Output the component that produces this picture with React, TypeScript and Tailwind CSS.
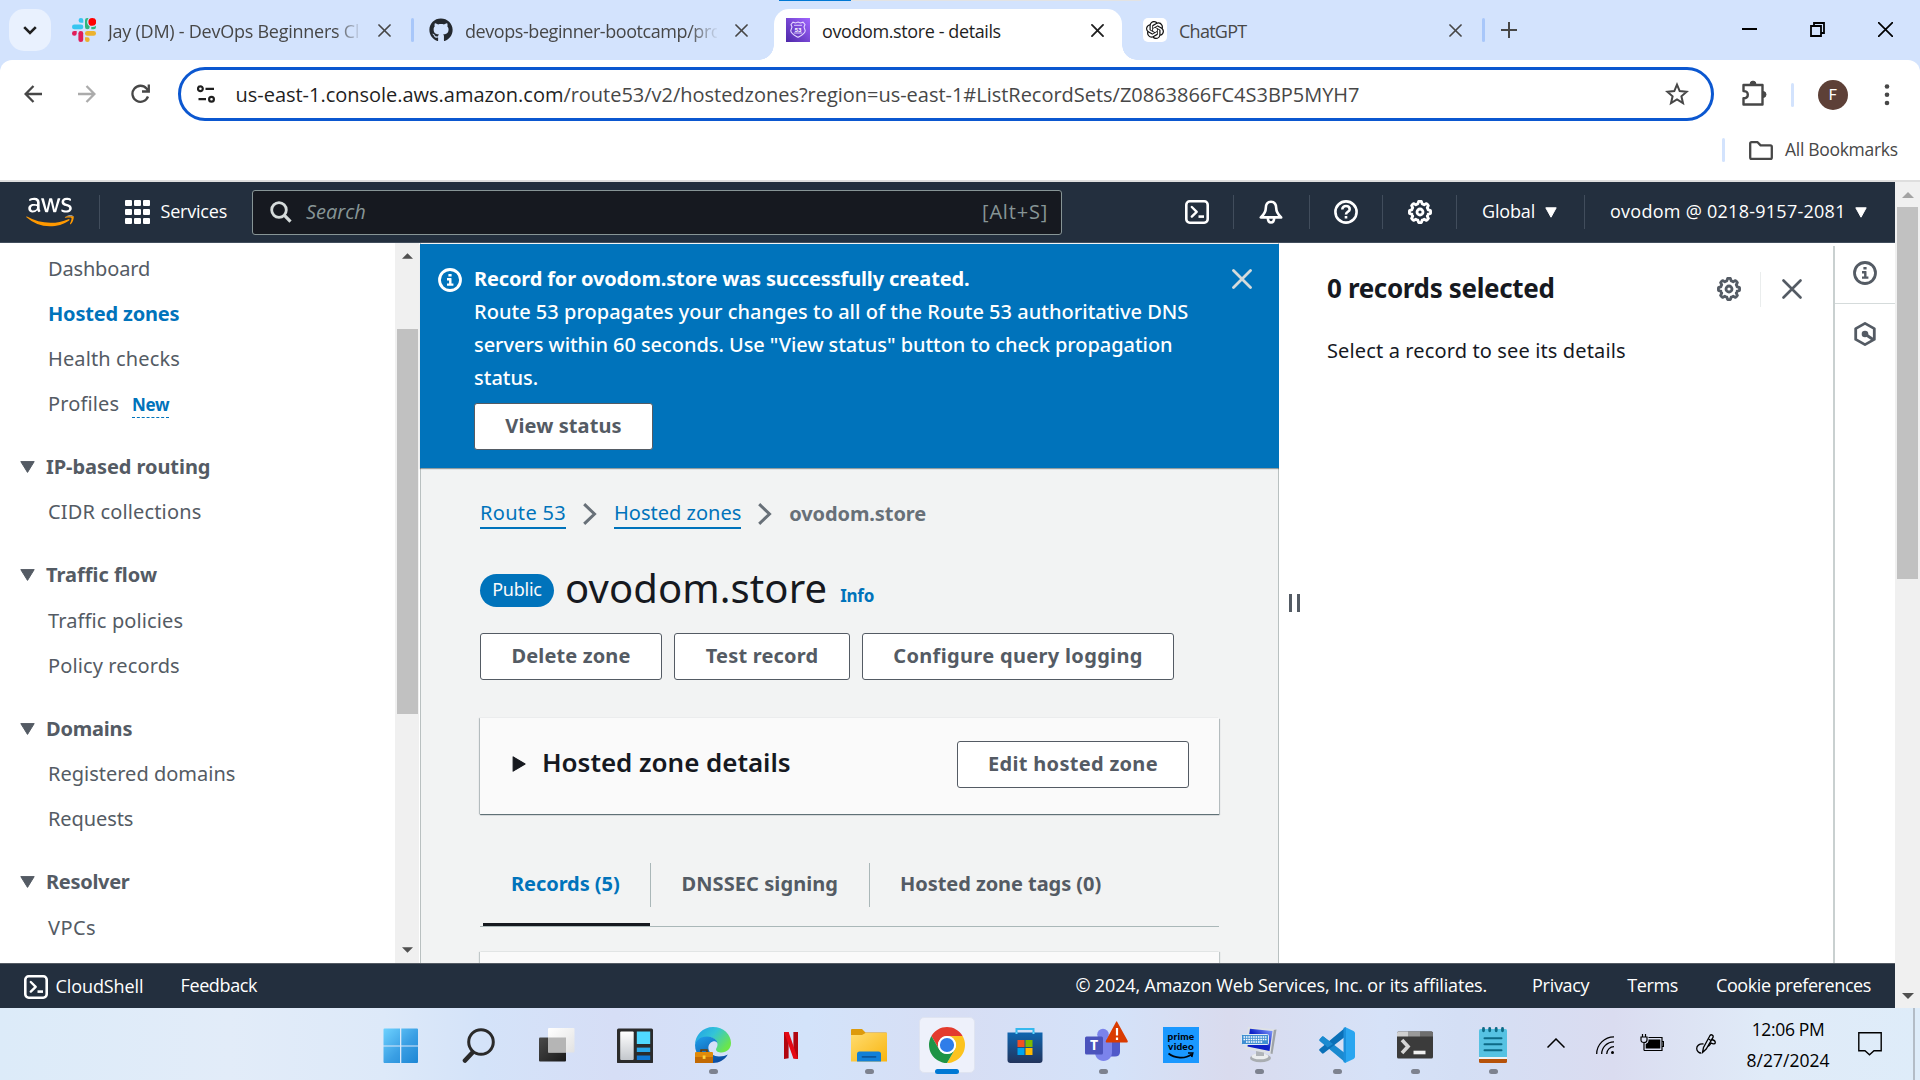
import type { ReactNode } from 'react';
import { FaAws, FaGithub } from 'react-icons/fa';
import { SiOpenai } from 'react-icons/si';

/* ---------- shared icons ---------- */

function gearPath(cx: number, cy: number, r: number, bump: number) {
  const pts: string[] = [];
  for (let i = 0; i < 96; i++) {
    const a = (i / 96) * Math.PI * 2;
    const wave = Math.max(-1, Math.min(1, Math.cos(a * 8) * 2));
    const rad = r + bump * wave;
    pts.push(`${(cx + rad * Math.cos(a)).toFixed(2)} ${(cy + rad * Math.sin(a)).toFixed(2)}`);
  }
  return `M${pts.join('L')}Z`;
}
const GEAR = gearPath(12, 12, 9.5, 1.1);

function Gear() {
  return (
    <svg className="size-6 shrink-0" viewBox="0 0 24 24" fill="none" stroke="currentColor" strokeWidth="2.8" strokeLinejoin="round">
      <path d={GEAR} />
      <circle cx="12" cy="12" r="3" />
    </svg>
  );
}

function Shell() {
  return (
    <svg className="size-6 shrink-0" viewBox="0 0 24 24" fill="none" stroke="currentColor" strokeWidth="2.6">
      <rect x="1.3" y="1.3" width="21.4" height="21.4" rx="3.4" />
      <path d="M6.8 7l4.900 4.800-4.900 4.800" strokeLinejoin="round" strokeLinecap="round" strokeWidth="2.4" />
      <path d="M13.500 16.600h5.500" strokeWidth="2.6" />
    </svg>
  );
}

function Info() {
  return (
    <svg className="size-6 shrink-0" viewBox="0 0 24 24" fill="none" stroke="currentColor" strokeWidth="2.8">
      <circle cx="12" cy="12" r="10.5" />
      <path d="M10.4 7.3h3.2M9 11.3h4.4M9 16.6h6.4M12.3 11v5.5" strokeWidth="2.4" />
    </svg>
  );
}

function Cross({ className, w }: { className: string; w: number }) {
  return (
    <svg className={`shrink-0 ${className}`} viewBox="0 0 20 20" fill="none" stroke="currentColor" strokeWidth={w} strokeLinecap="round">
      <path d="M1.5 1.5l17 17M18.5 1.5l-17 17" />
    </svg>
  );
}

function Caret({ className }: { className: string }) {
  return (
    <svg className={className} viewBox="0 0 12 11" fill="currentColor" stroke="currentColor" strokeLinejoin="round" strokeWidth="1">
      <path d="M.8.8h10.4L6 10.2z" />
    </svg>
  );
}

function ScrollArrow({ down, className }: { down?: boolean; className: string }) {
  return (
    <svg className={className} viewBox="0 0 12 6" fill="currentColor">
      <path d={down ? 'M0 0h12L6 6z' : 'M0 6h12L6 0z'} />
    </svg>
  );
}

/* ---------- browser chrome ---------- */

function SlackIcon() {
  return (
    <svg className="size-6 shrink-0" viewBox="0 0 24 24">
      <g fill="#36c5f0"><path d="M11.3 4.7H9A2.35 2.35 0 1 1 11.3 2.3z" /><rect y="6.6" width="11.3" height="4.7" rx="2.3" /></g>
      <g fill="#2eb67d"><rect x="13" width="4.7" height="11.3" rx="2.3" /><path d="M19.3 11.3V9A2.35 2.35 0 1 1 21.7 11.3z" /></g>
      <g fill="#e01e5a"><path d="M4.7 13v2.3A2.35 2.35 0 1 1 2.3 13z" /><rect x="6.4" y="13" width="4.8" height="11" rx="2.3" /></g>
      <g fill="#ecb22e"><rect x="13" y="13" width="11" height="4.7" rx="2.3" /><path d="M13 19.3h2.3A2.35 2.35 0 1 1 13 21.7z" /></g>
      <circle cx="20.300" cy="3.900" r="5.200" fill="#d3e3fd" />
      <circle cx="20.3" cy="3.9" r="3.9" fill="#ff0000" />
    </svg>
  );
}

function Route53Icon() {
  return (
    <svg className="size-6 shrink-0" viewBox="0 0 24 24" fill="none">
      <defs>
        <linearGradient id="r53" x1="0" y1="1" x2="1" y2="0"><stop stopColor="#4d27a8" /><stop offset="1" stopColor="#a166ff" /></linearGradient>
      </defs>
      <rect width="24" height="24" fill="url(#r53)" />
      <path d="M12 4l2.4 1 2.6-.8 2 2.3-1 2.5 1.2 3.7c0 3-3.6 4.600-7.200 6.600-3.600-2-7.200-3.600-7.200-6.600L6 9 5 6.500l2-2.300 2.600.8z" stroke="#e6d8ff" strokeWidth="1.1" />
      <path d="M8 7.300h8M7.800 15h8.400" stroke="#e6d8ff" strokeWidth=".9" />
      <text x="12" y="14" textAnchor="middle" fontFamily="Roboto" fontSize="6" fontWeight="700" fill="#fff">53</text>
    </svg>
  );
}

function TabTitle({ children, className }: { children: ReactNode; className: string }) {
  return <span className={`shrink-0 overflow-hidden whitespace-nowrap pt-[2px] text-[18px] leading-6 ${className}`}>{children}</span>;
}

function TabStrip() {
  return (
    <div className="relative flex h-[60px] shrink-0 items-start bg-[#d3e3fd] pt-[9px] font-['Open_Sans',sans-serif] text-[#474747]">
      <div className="absolute left-[779px] top-0 flex h-px w-[362px] bg-[#e3e3e3]"><div className="w-[72px] bg-[#0078d4]" /></div>
      <div className="ml-[9px] flex size-[42px] items-center justify-center rounded-[15px] bg-[#e9f1fe] text-[#1f1f1f]">
        <svg className="h-[9px] w-[14px]" viewBox="0 0 14 9" fill="none" stroke="currentColor" strokeWidth="2.600"><path d="M1.200 1.200L7 7l5.800-5.800" /></svg>
      </div>

      <div className="ml-[21px] flex h-[42px] w-[342px] items-center">
        <SlackIcon />
        <TabTitle className="ml-3 w-[252px] tracking-[-0.25px] [mask-image:linear-gradient(to_right,#000_228px,transparent_254px)]">Jay (DM) - DevOps Beginners Cl</TabTitle>
        <Cross className="ml-[18px] size-[13px]" w={2.600} />
        <div className="ml-[20px] h-6 w-[3px] rounded bg-[#a8c7fa]" />
      </div>

      <div className="ml-[15px] flex h-[42px] w-[345px] items-center">
        <FaGithub className="size-6 shrink-0 text-[#24292f]" />
        <TabTitle className="ml-[12px] w-[252px] tracking-[-0.43px] [mask-image:linear-gradient(to_right,#000_224px,transparent_254px)]">devops-beginner-bootcamp/pro</TabTitle>
        <Cross className="ml-[18px] size-[13px]" w={2.600} />
      </div>

      <div className="relative flex h-[51px] w-[348px] rounded-t-[15px] bg-white">
        <div className="absolute -left-[15px] bottom-0 size-[15px] bg-[radial-gradient(circle_at_0_0,transparent_14.500px,#fff_15px)]" />
        <div className="absolute -right-[15px] bottom-0 size-[15px] bg-[radial-gradient(circle_at_100%_0,transparent_14.500px,#fff_15px)]" />
        <div className="flex h-[42px] w-full items-center pl-3 text-[#1f1f1f]">
          <Route53Icon />
          <TabTitle className="ml-3 w-[252px] tracking-[-0.4px]">ovodom.store - details</TabTitle>
          <Cross className="ml-[17px] size-[13px]" w={2.800} />
        </div>
      </div>

      <div className="ml-[21px] flex h-[42px] w-[342px] items-center">
        <div className="flex size-6 shrink-0 items-center justify-center rounded-[5px] bg-white text-[#111]"><SiOpenai className="size-[18px]" /></div>
        <TabTitle className="ml-3 w-[252px] tracking-[-0.75px]">ChatGPT</TabTitle>
        <Cross className="ml-[18px] size-[13px]" w={2.600} />
        <div className="ml-[20px] h-6 w-[3px] shrink-0 rounded bg-[#a8c7fa]" />
      </div>

      <svg className="ml-[16px] mt-[13px] size-4" viewBox="0 0 16 16" stroke="currentColor" strokeWidth="2"><path d="M8 0v16M0 8h16" /></svg>
      <div className="ml-auto mr-[27px] mt-[13px] flex h-[15px] gap-[53px] text-black">
        <svg className="size-[15px]" viewBox="0 0 15 15" stroke="currentColor" strokeWidth="2"><path d="M0 7h15" /></svg>
        <svg className="size-[15px]" viewBox="0 0 15 15" fill="none" stroke="currentColor" strokeWidth="1.800"><path d="M1 4h10v10H1zM4 4V1h10v10h-3" /></svg>
        <svg className="size-[15px]" viewBox="0 0 15 15" stroke="currentColor" strokeWidth="1.700"><path d="M0 0l15 15M15 0L0 15" /></svg>
      </div>
    </div>
  );
}

function Toolbar() {
  return (
    <div className="shrink-0 bg-[#d3e3fd]">
      <div className="flex h-[68px] items-start rounded-t-[12px] bg-white font-['Open_Sans',sans-serif] text-[#474747]">
        <div className="flex h-[68px] w-[178px] items-center pl-6">
          <svg className="size-[18px]" viewBox="0 0 18 18" fill="none" stroke="currentColor" strokeWidth="2.300"><path d="M18 9H2M9.500 1L1.600 9l7.900 8" /></svg>
          <svg className="ml-9 size-[18px] text-[#ababab]" viewBox="0 0 18 18" fill="none" stroke="currentColor" strokeWidth="2.300"><path d="M0 9h16M8.500 1l7.900 8-7.900 8" /></svg>
          <svg className="ml-[35px] h-5 w-[19px]" viewBox="0 0 19 20" fill="none" stroke="currentColor" strokeWidth="2.300"><path d="M17 12.500A8 8 0 1 1 15.500 4.500L17.600 7M17.800 0.500V7.500H11" /></svg>
        </div>
        <div className="mt-[7px] flex h-[54px] w-[1536px] items-center rounded-full border-[3px] border-[#0b57d0] pl-4">
          <svg className="h-[18px] w-[18px] text-[#1f1f1f]" viewBox="0 0 18 18" fill="none" stroke="currentColor" strokeWidth="2.200"><circle cx="3.400" cy="3.800" r="2.400" /><path d="M8.500 3.800H17M1.500 14.200H9" /><circle cx="14.500" cy="14.200" r="2.400" /></svg>
          <span className="ml-[20.500px] mt-[2px] whitespace-nowrap text-[20px] leading-7 tracking-[-0.02px] text-[#474747]"><span className="text-[#1f1f1f]">us-east-1.console.aws.amazon.com</span>/route53/v2/hostedzones?region=us-east-1#ListRecordSets/Z0863866FC4S3BP5MYH7</span>
          <svg className="ml-auto mr-[22px] size-6" viewBox="0 0 24 24" fill="none" stroke="currentColor" strokeWidth="2"><path d="M12 2.600l2.700 6.500 7 .6-5.300 4.600 1.600 6.900-6-3.700-6 3.700 1.600-6.900-5.300-4.600 7-.6z" /></svg>
        </div>
        <svg className="ml-[27px] mt-[20px] h-[27px] w-[26px]" viewBox="0 0 26 27" fill="none" stroke="currentColor" strokeWidth="2.400"><path d="M2.500 5h19v19.500h-19v-6.200c3 0 4.300-1.800 4.300-3.600s-1.300-3.600-4.300-3.600z" strokeLinejoin="round" /><path d="M9 4.500a3 3.400 0 0 1 6 0zM22 11.500a3 3 0 0 1 0 6z" fill="currentColor" strokeWidth="1" /></svg>
        <div className="ml-[24px] mt-[23px] h-6 w-[3px] rounded bg-[#d3e3fd]" />
        <div className="ml-6 mt-5 flex size-[30px] items-center justify-center rounded-full bg-[#5d4037] font-['Roboto',sans-serif] text-[15px] text-white">F</div>
        <svg className="ml-9 mt-[23px] h-6 w-[6px]" viewBox="0 0 6 24" fill="currentColor"><circle cx="3" cy="3.500" r="2.300" /><circle cx="3" cy="11.700" r="2.300" /><circle cx="3" cy="20" r="2.300" /></svg>
      </div>
      <div className="flex h-[52px] items-center bg-white pb-[8px] pl-[1722px] pt-0 font-['Open_Sans',sans-serif] text-[#474747]">
        <div className="h-6 w-[3px] rounded bg-[#d3e3fd]" />
        <svg className="ml-6 h-[19px] w-[24px] shrink-0" viewBox="0 0 24 19" fill="none" stroke="currentColor" strokeWidth="2.300" strokeLinejoin="round"><path d="M1.200 2.600q0-1.400 1.400-1.400h6l3 3.200h9.800q1.400 0 1.400 1.400v10.600q0 1.400-1.400 1.400H2.600q-1.400 0-1.400-1.400z" /></svg>
        <span className="mb-[2px] ml-3 whitespace-nowrap text-[17.500px] tracking-[-0.3px]">All Bookmarks</span>
      </div>
      <div className="h-[2px] bg-[#dedede]" />
    </div>
  );
}

/* ---------- AWS header ---------- */

function NavCell({ children, className }: { children: ReactNode; className: string }) {
  return <div className={`flex h-[34px] shrink-0 items-center border-l border-[#414d5c] ${className}`}>{children}</div>;
}

function AwsHeader() {
  return (
    <header className="flex h-[61px] shrink-0 items-center border-b border-[#414d5c] bg-[#232f3e] font-['Open_Sans',sans-serif] text-[18px] font-medium text-white">
      <div className="relative ml-[26px] h-[38px] w-12 shrink-0">
        <FaAws className="absolute inset-0 h-[38px] w-12 [clip-path:inset(0_0_39%_0)]" />
        <FaAws className="absolute inset-0 h-[38px] w-12 text-[#ff9900] [clip-path:inset(61%_0_0_0)]" />
      </div>
      <NavCell className="ml-[25px] w-[153px] pl-[25px]">
        <div className="grid grid-cols-3 gap-[2.500px]">
          {Array.from({ length: 9 }, (_, i) => <div key={i} className="size-[6.500px] rounded-[1px] bg-white" />)}
        </div>
        <span className="mb-px ml-[11px] tracking-[-0.2px]">Services</span>
      </NavCell>
      <div className="flex h-[45px] w-[810px] shrink-0 items-center rounded-[3px] border border-[#879596] bg-[#161920] pl-[17px] pr-[13px] text-[20px] font-normal text-[#879596]">
        <svg className="size-[22px] text-[#d5dbdb]" viewBox="0 0 22 22" fill="none" stroke="currentColor" strokeWidth="2.800"><circle cx="9" cy="9" r="7.300" /><path d="M14.200 14.200l6.300 6.500" strokeWidth="3.200" /></svg>
        <span className="ml-[14px] text-[20px] italic">Search</span>
        <span className="ml-auto text-[20px] tracking-[0.8px]">[Alt+S]</span>
      </div>
      <div className="flex w-[171px] shrink-0 justify-end pr-6"><Shell /></div>
      <NavCell className="w-[76px] justify-center pr-[2px]">
        <svg className="size-6" viewBox="0 0 24 24" fill="none" stroke="currentColor" strokeWidth="2.600" strokeLinejoin="round"><path d="M12 1.800c-3.600 0-5.200 2.800-5.200 6.200 0 4-1.800 6.500-5 9.400h20.400c-3.200-2.900-5-5.400-5-9.400 0-3.400-1.600-6.200-5.200-6.200z" /><path d="M8.800 17.500c0 3.200 1.200 5 3.200 5s3.200-1.800 3.200-5" /></svg>
      </NavCell>
      <NavCell className="w-[73px] justify-center">
        <svg className="size-6" viewBox="0 0 24 24" fill="none" stroke="currentColor" strokeWidth="2.600"><circle cx="12" cy="12" r="10.600" /><path d="M8.300 9.400c0-2 1.500-3.400 3.700-3.400s3.700 1.300 3.700 3.200c0 2.600-3.700 2.600-3.700 5.200M12 15.900v2.500" /></svg>
      </NavCell>
      <NavCell className="w-[74px] justify-center"><Gear /></NavCell>
      <NavCell className="w-[128px] pl-[25px]">
        <span className="mb-px tracking-[-0.15px]">Global</span>
        <Caret className="ml-[10px] h-[11px] w-3" />
      </NavCell>
      <NavCell className="pl-[25px]">
        <span className="mb-px whitespace-nowrap tracking-[0.26px]">ovodom @ 0218-9157-2081</span>
        <Caret className="ml-[9px] h-[11px] w-3" />
      </NavCell>
    </header>
  );
}

/* ---------- side navigation ---------- */

function NavItem({ children, className = 'text-[#545b64]' }: { children: ReactNode; className?: string }) {
  return <a className={`flex h-[45px] items-center pl-12 ${className}`}>{children}</a>;
}

function NavSection({ title, titleClass, children }: { title: string; titleClass: string; children: ReactNode }) {
  return (
    <div className="pt-[17.500px]">
      <div className="flex h-[46px] items-center pl-[19.500px] font-bold text-[#545b64]">
        <svg className="h-3 w-[15px]" viewBox="0 0 15 12" fill="currentColor" stroke="currentColor" strokeLinejoin="round"><path d="M.8.600h13.400L7.500 11.400z" /></svg>
        <span className={`ml-[11.500px] ${titleClass}`}>{title}</span>
      </div>
      {children}
    </div>
  );
}

function SideNav() {
  return (
    <nav className="flex w-[420px] shrink-0 overflow-hidden">
      <div className="w-[395px] whitespace-nowrap bg-white pt-[3px] text-[20px] leading-[30px]">
        <NavItem><span className="tracking-[-0.17px]">Dashboard</span></NavItem>
        <NavItem className="font-bold tracking-[-0.18px] text-[#0073bb]">Hosted zones</NavItem>
        <NavItem><span className="tracking-[0.12px]">Health checks</span></NavItem>
        <NavItem>
          <span className="tracking-[0.12px]">Profiles</span>
          <span className="ml-[13px] mt-[3px] border-b border-dashed border-[#0073bb] text-[17px] font-bold leading-[25px] tracking-[-0.4px] text-[#0073bb]">New</span>
        </NavItem>
        <NavSection title="IP-based routing" titleClass="tracking-[-0.06px]">
          <NavItem><span className="tracking-[0.15px]">CIDR collections</span></NavItem>
        </NavSection>
        <NavSection title="Traffic flow" titleClass="">
          <NavItem><span className="tracking-[0.12px]">Traffic policies</span></NavItem>
          <NavItem><span className="tracking-[0.12px]">Policy records</span></NavItem>
        </NavSection>
        <NavSection title="Domains" titleClass="tracking-[-0.2px]">
          <NavItem>Registered domains</NavItem>
          <NavItem><span className="tracking-[-0.1px]">Requests</span></NavItem>
        </NavSection>
        <NavSection title="Resolver" titleClass="tracking-[-0.3px]">
          <NavItem><span className="tracking-[0.4px]">VPCs</span></NavItem>
        </NavSection>
      </div>
      <div className="flex w-6 flex-col items-center bg-[#f0f0f0] text-[#505050]">
        <ScrollArrow className="mt-[10px] h-[6px] w-[11px]" />
        <div className="ml-px mt-[70px] h-[385px] w-[21px] bg-[#c1c1c1]" />
        <ScrollArrow down className="mb-[10px] mt-auto h-[6px] w-[11px]" />
      </div>
    </nav>
  );
}

/* ---------- main column ---------- */

function Btn({ children, className }: { children: ReactNode; className: string }) {
  return <button className={`flex shrink-0 items-center justify-center whitespace-nowrap rounded-[3px] border border-[#545b64] bg-white pb-[1px] text-[20px] font-bold text-[#545b64] ${className}`}>{children}</button>;
}

function Chevron() {
  return <svg className="h-[22px] w-[14px] shrink-0" viewBox="0 0 14 22" fill="none" stroke="#687078" strokeWidth="3"><path d="M1.200 1.200L11.500 11 1.200 20.800" /></svg>;
}

function Main() {
  return (
    <main className="flex w-[859px] shrink-0 flex-col border-l border-r border-[#b9c0c0] bg-[#f2f3f3]">
      <section className="-mx-px mt-px flex h-[224px] shrink-0 bg-[#0073bb] pl-[18px] pt-[17.500px] text-[20px] leading-[33px] text-white shadow-[0_1px_1px_rgba(0,28,36,0.4)]">
        <div className="mt-[6.500px]"><Info /></div>
        <div className="ml-[12px] whitespace-nowrap font-medium">
          <p className="font-bold tracking-[-0.15px]">Record for ovodom.store was successfully created.</p>
          <p className="tracking-[0.02px]">Route 53 propagates your changes to all of the Route 53 authoritative DNS</p>
          <p className="tracking-[-0.06px]">servers within 60 seconds. Use "View status" button to check propagation</p>
          <p>status.</p>
          <Btn className="mt-[9.500px] h-[47px] w-[179px] pb-[3px] tracking-[0.1px]">View status</Btn>
        </div>
        <Cross className="ml-auto mr-[27px] mt-[7.500px] size-5 text-[#d5dbdb]" w={2.800} />
      </section>

      <div className="flex flex-col pl-[59px] pr-[59px]">
        <div className="mt-[30px] flex h-8 items-center text-[20px] leading-[30px]">
          <a className="border-b-2 border-[#0073bb] leading-[28px] tracking-[0.32px] text-[#0073bb]">Route 53</a>
          <div className="ml-[17px]"><Chevron /></div>
          <a className="ml-[17px] border-b-2 border-[#0073bb] leading-[28px] text-[#0073bb]">Hosted zones</a>
          <div className="ml-[17px]"><Chevron /></div>
          <span className="ml-[17px] font-bold tracking-[-0.1px] text-[#687078]">ovodom.store</span>
        </div>

        <div className="mt-[30px] flex h-[60px] items-center">
          <span className="mt-[1px] flex h-[33px] w-[74px] items-center justify-center rounded-full bg-[#0073bb] pb-[2px] text-[18px] tracking-[-0.25px] text-[#fafafa]">Public</span>
          <h1 className="mb-[5px] ml-[11px] text-[40px] leading-[50px] tracking-[0.1px] text-[#16191f]">ovodom.store</h1>
          <a className="ml-[13px] mt-[12px] text-[17px] font-bold leading-6 tracking-[-0.22px] text-[#0073bb]">Info</a>
        </div>

        <div className="mt-[13px] flex gap-3">
          <Btn className="h-[47px] w-[182px] tracking-[0.14px]">Delete zone</Btn>
          <Btn className="h-[47px] w-[176px] tracking-[0.2px]">Test record</Btn>
          <Btn className="h-[47px] w-[312px] tracking-[0.33px]">Configure query logging</Btn>
        </div>

        <section className="mt-[38px] flex h-[96px] items-center bg-[#fafafa] pl-8 pr-[30px] shadow-[0_1px_1px_rgba(0,28,36,0.5),1px_1px_1px_rgba(0,28,36,0.18),-1px_0_1px_rgba(0,28,36,0.18)]">
          <svg className="mb-[5px] h-[16px] w-[14px]" viewBox="0 0 13 15" fill="#16191f" stroke="#16191f" strokeLinejoin="round"><path d="M1 .8v13.400l11.200-6.700z" /></svg>
          <h2 className="mb-[9px] ml-[16px] whitespace-nowrap text-[26px] font-semibold leading-[34px] tracking-[-0.04px] text-[#16191f]">Hosted zone details</h2>
          <Btn className="mb-[3px] ml-auto h-[47px] w-[232px] tracking-[0.3px]">Edit hosted zone</Btn>
        </section>

        <div className="mt-[49px] flex h-[64px] border-b border-[#aab7b8] text-[20px] font-bold leading-[42px] text-[#545b64]">
          <div className="ml-[3px] flex w-[168px] flex-col justify-between">
            <div className="h-[44px] border-r border-[#aab7b8] pl-[28px] tracking-[-0.060px] text-[#0073bb]">Records (5)</div>
            <div className="h-[3px] w-[167px] bg-[#16191f]" />
          </div>
          <div className="h-[44px] w-[219px] whitespace-nowrap border-r border-[#aab7b8] pl-[30.500px] tracking-[0.08px]">DNSSEC signing</div>
          <div className="h-[44px] whitespace-nowrap pl-[30px] tracking-[-0.06px]">Hosted zone tags (0)</div>
        </div>
        <div className="mt-[25px] h-[40px] bg-[#fafafa] shadow-[-1px_0_1px_rgba(0,28,36,0.2),1px_0_1px_rgba(0,28,36,0.2)]" />
      </div>
    </main>
  );
}

/* ---------- details panel and rail ---------- */

function DetailsPanel() {
  return (
    <>
      <aside className="flex w-[554px] shrink-0 bg-white">
        <div className="mt-[351px] flex h-[18px] w-[48px] gap-[5px] pl-[10px]"><div className="w-[3px] bg-[#545b64]" /><div className="w-[3px] bg-[#545b64]" /></div>
        <div className="flex-1">
          <div className="mt-[28px] flex h-[36px] items-center text-[#545b64]">
            <h2 className="mb-[3px] text-[26px] font-bold leading-[34px] tracking-[-0.35px] text-[#16191f]">0 records selected</h2>
            <div className="ml-auto"><Gear /></div>
            <div className="ml-[19px] h-[35px] w-px bg-[#eaeded]" />
            <Cross className="ml-[21px] mr-[31px] size-[20px]" w={2.600} />
          </div>
          <p className="mt-[29px] text-[20px] leading-[30px] tracking-[0.13px] text-[#16191f]">Select a record to see its details</p>
        </div>
      </aside>
      <aside className="mt-[3px] flex w-[62px] shrink-0 flex-col items-center border-l-2 border-[#c9d0d0] bg-white text-[#545b64]">
        <div className="flex h-[58px] w-full items-center justify-center border-b border-[#d5dbdb] pb-[4px]"><Info /></div>
        <svg className="mt-[18px] size-6" viewBox="0 0 24 24" fill="none" stroke="currentColor" strokeWidth="2.800" strokeLinejoin="round"><path d="M12 1.400l9.300 5.200v10.800L12 22.600l-9.300-5.200V6.600z" /><circle cx="12" cy="12" r="3.300" fill="currentColor" stroke="none" /><path d="M12 12l8 5.500" /></svg>
      </aside>
    </>
  );
}

function AwsFooter() {
  return (
    <footer className="flex h-[45px] shrink-0 items-center whitespace-nowrap border-t border-[#545b64] bg-[#232f3e] pb-px pl-6 font-['Open_Sans',sans-serif] text-[18px] font-medium text-white">
      <div className="mt-[3px]"><Shell /></div>
      <span className="ml-[7.500px] mt-[2px] tracking-[-0.09px]">CloudShell</span>
      <span className="ml-[37px] tracking-[-0.37px]">Feedback</span>
      <span className="ml-auto tracking-[-0.16px]">© 2024, Amazon Web Services, Inc. or its affiliates.</span>
      <span className="ml-[45px] tracking-[-0.3px]">Privacy</span>
      <span className="ml-[38px] tracking-[-0.4px]">Terms</span>
      <span className="ml-[38px] mr-[24px] tracking-[-0.4px]">Cookie preferences</span>
    </footer>
  );
}

/* ---------- taskbar ---------- */

function TaskItem({ children, dot }: { children: ReactNode; dot?: boolean }) {
  return (
    <div className="flex h-[72px] w-[78px] flex-col items-center pt-[19px]">
      {children}
      {dot && <div className="mt-[6px] h-[5px] w-[9px] rounded-full bg-[#7d828f]" />}
    </div>
  );
}

function Taskbar() {
  return (
    <div className="flex h-[72px] shrink-0 bg-[linear-gradient(to_right,#dcebf9_0%,#e2ecf9_12%,#dde9f9_20%,#d4e3f9_25%,#d6def6_32%,#d3e3fa_42%,#d7def4_50%,#d4e2f9_58%,#d9dbee_64%,#d6e2f8_72%,#d4dff5_76%,#dadcf0_84%,#e0ebf8_92%,#deecf9_100%)] pl-[362px]">
      <TaskItem>
        <svg className="size-9" viewBox="0 0 36 36">
          <defs><linearGradient id="win" x1="0" y1="0" x2="1" y2="1"><stop stopColor="#6ed2ff" /><stop offset=".55" stopColor="#3a9fe4" /><stop offset="1" stopColor="#1c86d4" /></linearGradient></defs>
          <path d="M.5 2.500q0-1 1-1H17v17H.5zM18.300 1.500h15.700q1 0 1 1v16H18.300zM.5 19.500H17v16.500H1.500q-1 0-1-1zM18.300 19.500H35V35q0 1-1 1H18.300z" fill="url(#win)" />
        </svg>
      </TaskItem>
      <TaskItem>
        <svg className="size-9" viewBox="0 0 36 36" fill="none" stroke="#2a2a2a"><circle cx="20" cy="15" r="12.300" strokeWidth="3" /><path d="M11.500 25.500L4 33.500" strokeWidth="4.600" strokeLinecap="round" /></svg>
      </TaskItem>
      <TaskItem>
        <svg className="size-9" viewBox="0 0 36 36">
          <defs>
            <linearGradient id="tv" x1="0" y1="0" x2="1" y2="1"><stop stopColor="#4a4a4a" /><stop offset="1" stopColor="#1a1a1a" /></linearGradient>
            <linearGradient id="tw" x1="0" y1="0" x2="1" y2="1"><stop stopColor="#fff" /><stop offset="1" stopColor="#e2e2e2" /></linearGradient>
          </defs>
          <rect y="10.500" width="27" height="24" rx="1" fill="url(#tv)" /><rect x="9" y="1" width="26.500" height="24.500" rx="1" fill="url(#tw)" /><path d="M9 10.500h18v15H9z" fill="#b5b5b5" />
        </svg>
      </TaskItem>
      <TaskItem>
        <svg className="size-9" viewBox="0 0 36 36">
          <defs><linearGradient id="wg" x1="0" y1="0" x2="0" y2="1"><stop stopColor="#fff" /><stop offset="1" stopColor="#c3c7cc" /></linearGradient></defs>
          <rect y="1.500" width="36" height="35" rx="1.500" fill="#2b2b2b" /><rect x="3.200" y="4.500" width="13.500" height="28.500" rx="1" fill="url(#wg)" /><path d="M19.800 4.500h13.400v12.500H19.800z" fill="#50d9ff" /><path d="M19.800 20.600h13.400v4.400H19.800z" fill="#28a8ea" /><path d="M19.800 28.500h13.400v4.500H19.800z" fill="#0f78d4" />
        </svg>
      </TaskItem>
      <TaskItem dot>
        <svg className="size-9" viewBox="0 0 36 36">
          <defs>
            <linearGradient id="e1" x1="0" y1="0" x2="1" y2=".6"><stop stopColor="#1f9de8" /><stop offset=".5" stopColor="#33c4d8" /><stop offset="1" stopColor="#6be64a" /></linearGradient>
            <linearGradient id="e2" x1="0" y1="0" x2=".6" y2="1"><stop stopColor="#1fa0ec" /><stop offset="1" stopColor="#0b4ea2" /></linearGradient>
          </defs>
          <path d="M0 18C0 8 8 0 18 0c10.500 0 18 7.500 18 16 0 6-4.600 9.500-9.500 9.500-3 0-5.500-1.300-5.500-3 0-1.400 1.500-2 1.500-5C22.500 13 18 10 12.500 10 6 10 .8 13 0 18z" fill="url(#e1)" />
          <path d="M0 18c.6-5.500 6-8.500 12-8.500 5.500 0 10 3 10.400 6.500-1-1.500-3-2-4.600-1.500-3 1-4.800 4-4.300 7.500.8 4.500 5.500 7.500 10.500 7.500 4 0 6.500-1 8.800-2C29.500 33 24.500 36 18 36 8 36 0 28 0 18z" fill="url(#e2)" />
          <rect y="25" width="18" height="11" rx="1" fill="#e08a0a" /><path d="M0 30h18v6H0z" fill="#c26a04" /><path d="M6 25v-2h6v2" stroke="#6b3a00" strokeWidth="1.500" fill="none" /><rect x="7.700" y="28.500" width="2.800" height="3.400" fill="#ffd23c" />
        </svg>
      </TaskItem>
      <TaskItem>
        <svg className="size-9" viewBox="0 0 36 36"><path d="M11 5h4.600v26.300l-4.600.7zM20.400 5H25v27l-4.600-.7z" fill="#b1060f" /><path d="M11 5h4.600L25 32l-4.600-.6z" fill="#e50914" /></svg>
      </TaskItem>
      <TaskItem dot>
        <svg className="size-9" viewBox="0 0 36 36">
          <defs><linearGradient id="fo" x1="0" y1="0" x2="1" y2="1"><stop stopColor="#ffdc70" /><stop offset="1" stopColor="#f9b50f" /></linearGradient></defs>
          <path d="M0 3q0-1 1-1h10l3.500 3.500H35q1 0 1 1V12H0z" fill="#dd9a0c" /><path d="M0 8h11l3.500-2H36v28.500H0z" fill="url(#fo)" /><path d="M6 34.500V27q0-2.500 2.500-2.500h19Q30 24.500 30 27v7.500z" fill="#1180d8" /><path d="M11.500 29.800h13" stroke="#0b569c" strokeWidth="1.800" strokeLinecap="round" />
        </svg>
      </TaskItem>
      <div className="mx-[11px] mt-[9px] flex size-14 flex-col items-center rounded-[5px] border border-[#dfe4f1] bg-[#eef1fb] pt-[9px]">
        <svg className="size-9 shrink-0" viewBox="2 2 44 44">
          <path d="M4.950 13A22 22 0 0 1 43.050 13H24A11 11 0 0 0 14.470 29.500z" fill="#e33b2e" />
          <path d="M43.050 13A22 22 0 0 1 24 46L33.530 29.500A11 11 0 0 0 24 13z" fill="#fcc31e" />
          <path d="M24 46A22 22 0 0 1 4.950 13L14.470 29.500A11 11 0 0 0 33.530 29.500z" fill="#1e9446" />
          <circle cx="24" cy="24" r="11" fill="#fff" /><circle cx="24" cy="24" r="8.700" fill="#2f7de9" />
        </svg>
        <div className="mt-[6px] h-[5px] w-6 shrink-0 rounded-full bg-[#0078d4]" />
      </div>
      <TaskItem>
        <svg className="size-9" viewBox="0 0 36 36">
          <defs><linearGradient id="st" x1="0" y1="0" x2="0" y2="1"><stop stopColor="#0f66b0" /><stop offset="1" stopColor="#22345c" /></linearGradient></defs>
          <path d="M9.500 8V2h17v6" fill="none" stroke="#35b8ee" strokeWidth="2" /><path d="M.5 5.500h35V33q0 3-3 3h-29q-3 0-3-3z" fill="url(#st)" /><path d="M9.500 5v2M26.500 5v2" stroke="#5fd8ff" strokeWidth="2" />
          <path d="M10.500 13h7v7h-7z" fill="#f25022" /><path d="M18.500 13h7v7h-7z" fill="#7fba00" /><path d="M10.500 21h7v7h-7z" fill="#00a4ef" /><path d="M18.500 21h7v7h-7z" fill="#ffb900" />
        </svg>
      </TaskItem>
      <TaskItem dot>
        <svg className="size-9 overflow-visible" viewBox="0 0 36 36">
          <circle cx="18" cy="7.500" r="5.800" fill="#7b83eb" /><path d="M24 14h11v11c0 3-2 4.500-5 4.500h-6z" fill="#5059c9" /><path d="M10 12h17v13c0 5.500-3.500 9-8.500 9S10 30.500 10 25z" fill="#7b83eb" />
          <rect y="9.500" width="18" height="18" rx="1.500" fill="#4b53bc" /><text x="9" y="23.300" textAnchor="middle" fontFamily="Open Sans" fontWeight="700" fontSize="14" fill="#fff">T</text>
          <path d="M32 -5.500L42.500 13.500q1 2-1.200 2H22.200q-2.200 0-1.200-2L31 -5q.5-1 1-.5z" fill="#da3b01" /><path d="M32 1v7.500M32 10.500v2.600" stroke="#fff" strokeWidth="2.200" />
        </svg>
      </TaskItem>
      <TaskItem>
        <div className="flex size-9 flex-col items-center bg-[#1a98ff] pt-[4px] font-['Lato',sans-serif] text-[10px] font-black leading-[10px] tracking-[0.2px] text-[#00050d]">
          <span>prime</span>
          <span>video</span>
          <svg className="mt-px h-[7px] w-7" viewBox="0 0 28 7" fill="none" stroke="#00050d" strokeWidth="1.700"><path d="M1.500 1.500c6 5 17 5.500 23 .8M21 1h4.700l-1 4" /></svg>
        </div>
      </TaskItem>
      <TaskItem dot>
        <svg className="size-9" viewBox="0 0 36 36">
          <defs><linearGradient id="pc" x1="0" y1="1" x2="1" y2="0"><stop stopColor="#0a1cc0" /><stop offset=".5" stopColor="#0f22c8" /><stop offset="1" stopColor="#8aa4ff" /></linearGradient></defs>
          <ellipse cx="19.500" cy="31" rx="10.500" ry="4.300" fill="#a9adb1" /><ellipse cx="19" cy="29.300" rx="8.500" ry="3" fill="#eceeef" /><path d="M15 22h8v7h-8z" fill="#b0b4b8" />
          <path d="M7 0l28.500 2.500L31.500 27 3.500 22z" fill="#dfe2e5" /><path d="M35.500 2.500L31.500 27l-2-.4L32.800 3z" fill="#9ea3a8" /><path d="M9 1.800l22.500 2.200-3 20L6.500 19.500z" fill="url(#pc)" />
          <rect x=".5" y="7.500" width="27" height="10" rx="1" fill="#3f8fd2" stroke="#dfe9f2" strokeWidth="1" /><path d="M2.500 10h23M2.500 12.500h23M5 15h17" stroke="#fff" strokeWidth="1.300" strokeDasharray="1.600 .8" />
        </svg>
      </TaskItem>
      <TaskItem dot>
        <svg className="size-9" viewBox="0 0 36 36">
          <path d="M.6 12.200L3 9.700q.8-.7 1.700 0L27 27v9L.6 14q-.9-.9 0-1.800z" fill="#1a8ad0" /><path d="M.6 23.800L3 26.300q.8.7 1.700 0L27 9V0L.6 22q-.9.900 0 1.800z" fill="#0a70b8" /><path d="M.6 12.200L3 9.700q.8-.7 1.700 0L14 17l-5.500 3.600z" fill="#1a8ad0" />
          <path d="M26 0l8.500 4q1.500.8 1.500 2.300v23.400q0 1.500-1.500 2.300L26 36l1-9V9z" fill="#2aa6f0" /><path d="M26 0q-1 1 1 2v32q-2 1-1 2l-1.500-1V1z" fill="#1c90dc" />
        </svg>
      </TaskItem>
      <TaskItem dot>
        <svg className="size-9" viewBox="0 0 36 36">
          <rect y="4.500" width="36" height="27" rx="1.500" fill="#3b3b3b" /><path d="M1.500 4.500H11v5H0V6q0-1.500 1.500-1.500z" fill="#d0d0d0" /><path d="M11 4.500h12v5H11z" fill="#9a9a9a" /><path d="M23 4.500h11.500Q36 4.500 36 6v3.500H23z" fill="#6e6e6e" />
          <path d="M5 13l6 6.500L5 26" fill="none" stroke="#d6d6d6" strokeWidth="3.600" /><path d="M16.500 25.500h12" stroke="#f0f0f0" strokeWidth="3.600" />
        </svg>
      </TaskItem>
      <TaskItem dot>
        <svg className="size-9" viewBox="0 0 36 36">
          <path d="M4 30h28v4.500q0 1.500-1.500 1.500h-25Q4 36 4 34.500z" fill="#b6520a" /><path d="M4 28h28v4H4z" fill="#f2f2f2" /><path d="M4 3.500Q4 2 5.500 2h25Q32 2 32 3.500V30H4z" fill="#56c2e2" />
          <path d="M9.500 11.300h17M9.500 17.300h17M9.500 23.300h17" stroke="#0d6a86" strokeWidth="2" strokeLinecap="round" /><path d="M8.500 1.500v2.300M14.700 1.500v2.300M21.200 1.500v2.300M27.500 1.500v2.300" stroke="#0d6a86" strokeWidth="2.800" strokeLinecap="round" />
        </svg>
      </TaskItem>

      <div className="ml-[15px] flex h-[72px] text-black">
        <svg className="mt-[30px] h-[10px] w-[18px]" viewBox="0 0 18 10" fill="none" stroke="currentColor" strokeWidth="1.500"><path d="M.5 9.500L9 1l8.500 8.500" /></svg>
        <svg className="ml-[31px] mt-[28px] size-[18px]" viewBox="0 0 18 18" fill="none" stroke="currentColor" strokeWidth="1.300"><path d="M.7 18C.7 8.500 8.500.8 18 .8M5.700 18C5.700 11.200 11.200 5.800 18 5.800M10.700 18c0-4 3.300-7.300 7.300-7.300" /><circle cx="16.500" cy="16.500" r="1.500" fill="currentColor" stroke="none" /></svg>
        <svg className="ml-[26px] mt-[26px] h-[18px] w-6" viewBox="0 0 24 18" fill="none" stroke="currentColor" strokeWidth="1.200"><path d="M8.500 3.500H22V16.500H4M22.500 7.500H23.500v5H22.500M1 3h6v3q0 2.500-3 2.500T1 6zM2.500 0v3M5.500 0v3M4 8.500v8" /><path d="M8.500 5.500H20.300v9H5.700V10q2.800-.8 2.800-3z" fill="currentColor" stroke="none" /></svg>
        <svg className="ml-[32px] mt-[26px] size-5" viewBox="0 0 20 20" fill="none" stroke="currentColor" strokeWidth="1.300"><path d="M6.500 18.500l1-5L14 1.500q1-1.200 2.300-.4t.7 2.300L10.200 15z" /><path d="M7.500 10C3 9.500.7 12 .7 14.500S3 19 5 19M15.500 5.500c2.500.5 4 2 3.700 3.500s-2.500 1-4 0c-1.200 1-1.500 3-3.200 3M12.500 5l2.500 1.500" /></svg>
      </div>
      <div className="ml-[27px] flex w-[90px] flex-col items-center pt-[5.500px] font-['Open_Sans',sans-serif] text-[17.500px] leading-[31.500px] text-black">
        <span className="tracking-[-0.35px]">12:06 PM</span>
        <span className="tracking-[0px]">8/27/2024</span>
      </div>
      <svg className="ml-[25px] mt-[24px] h-6 w-6" viewBox="0 0 24 24" fill="none" stroke="#000" strokeWidth="1.400"><path d="M.8.800h22.400v18H16l-4.500 4-4.500-4H.8z" /></svg>
      <div className="ml-auto mr-[5px] w-[2px] bg-[#b3bcc6]" />
    </div>
  );
}

export default function App() {
  return (
    <div className="flex h-[1080px] w-[1920px] flex-col overflow-hidden bg-white font-['Noto_Sans',sans-serif]">
      <TabStrip />
      <Toolbar />
      <div className="flex h-[826px] shrink-0">
        <div className="flex w-[1895px] shrink-0 flex-col">
          <AwsHeader />
          <div className="flex h-[720px] shrink-0 overflow-hidden">
            <SideNav />
            <Main />
            <DetailsPanel />
          </div>
          <AwsFooter />
        </div>
        <div className="flex w-[25px] flex-col items-center bg-[#f0f0f0]">
          <ScrollArrow className="mt-[10px] h-[6px] w-3 text-[#a3a3a3]" />
          <div className="mt-[9px] h-[372px] w-[21px] bg-[#c1c1c1]" />
          <ScrollArrow down className="mb-[9px] mt-auto h-[6px] w-3 text-[#505050]" />
        </div>
      </div>
      <Taskbar />
    </div>
  );
}
